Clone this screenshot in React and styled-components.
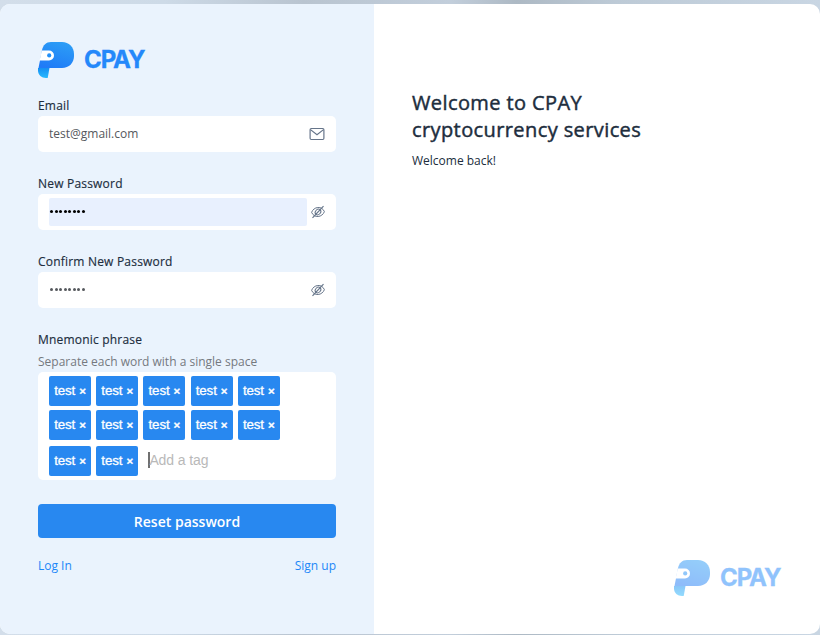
import React from "react";
import styled, { createGlobalStyle, css } from "styled-components";

const GlobalStyle = createGlobalStyle`
  * { box-sizing: border-box; }
  body {
    margin: 0;
    color: #202d3d;
    font-family: "Open Sans", "Noto Sans", sans-serif;
    font-size: 12px;
  }
`;

const Page = styled.div`
  height: 635px;
  padding: 4px 0 1px;
  background: linear-gradient(90deg, #d3deea 0%, #cddae7 20%, #b9c4d0 37%, #c2cedb 55%, #adb9c4 63%, #bdcad6 75%, #c9d6e3 100%);
`;

const Card = styled.div`
  display: flex;
  height: 630px;
  border-radius: 10px;
  background: #fff;
  overflow: hidden;
`;

const FormPanel = styled.main`
  width: 374px;
  padding: 38px 38px 0;
  background: #eaf3fd;
`;

const InfoPanel = styled.aside`
  flex: 1;
  display: flex;
  flex-direction: column;
  padding: 85px 38px 38px;
`;

const Brand = styled.div`
  display: flex;
  align-items: center;
  gap: 10px;
  height: 36px;
  opacity: ${(p) => (p.$faded ? 0.5 : 1)};
  ${(p) => p.$faded && css`
    margin-top: auto;
    margin-left: auto;
  `}
  svg { display: block; }
`;

const BrandName = styled.span`
  width: 62px;
  font: 700 24px/36px Inter, sans-serif;
  letter-spacing: -1.1px;
  -webkit-text-stroke: 0.3px #2488fa;
  color: #2488fa;
  white-space: nowrap;
`;

const Field = styled.div`
  margin-top: ${(p) => (p.$first ? 18 : 22)}px;
`;

const Label = styled.label`
  display: block;
  height: 20px;
  line-height: 20px;
  letter-spacing: 0.2px;
  -webkit-text-stroke: 0.15px currentColor;
`;

const Hint = styled.div`
  height: 20px;
  margin-top: 2px;
  line-height: 20px;
  color: #75797f;
`;

const InputBox = styled.div`
  display: flex;
  align-items: center;
  justify-content: space-between;
  height: 36px;
  padding: 4px 11px;
  border-radius: 5px;
  background: #fff;
  svg { display: block; flex: none; }
`;

const InputValue = styled.div`
  width: 258px;
  height: 28px;
  border-radius: 2px;
  line-height: 28px;
  color: ${(p) => (p.$filled ? "#000" : "#55585d")};
  background: ${(p) => (p.$filled ? "#e8f0fe" : "transparent")};
`;

const Dots = styled.div`
  display: flex;
  align-items: center;
  gap: 1.5px;
  height: 27px;
  padding-left: 1px;
`;

const Dot = styled.i`
  width: 3px;
  height: 3px;
  border-radius: 50%;
  background: currentColor;
`;

const TagsBox = styled.div`
  height: 108px;
  padding: 4px 11px;
  border-radius: 5px;
  background: #fff;
  font: 14px/30px "Liberation Sans", Arial, sans-serif;
`;

const TagRow = styled.div`
  display: flex;
  gap: 5.2px;
  margin-bottom: ${(p) => p.$gap || 0}px;
`;

const Tag = styled.span`
  display: flex;
  justify-content: center;
  gap: 4px;
  width: 42px;
  height: 30px;
  border-radius: 2px;
  color: #fff;
  background: #2888f0;
  font-size: 13.33px;
  letter-spacing: -0.1px;
  -webkit-text-stroke: 0.3px #fff;
`;

const TagClose = styled.b`
  font-size: 11.5px;
`;

const TagInput = styled.span`
  height: 16px;
  margin: 6px 0 0 5px;
  border-left: 2px solid #707070;
  line-height: 16px;
  color: #b9b9b9;
  text-indent: -1px;
  letter-spacing: -0.1px;
`;

const SubmitButton = styled.button`
  display: block;
  width: 100%;
  height: 34px;
  margin-top: 24px;
  padding: 1px 0 0;
  border: 0;
  border-radius: 4px;
  color: #fff;
  background: #2888f0;
  font: 600 14px/34px "Open Sans", "Noto Sans", sans-serif;
`;

const Links = styled.nav`
  display: flex;
  justify-content: space-between;
  margin-top: 18px;
  line-height: 20px;
`;

const Link = styled.a`
  color: #1c87f8;
`;

const Title = styled.h1`
  margin: 0;
  font-size: 20px;
  line-height: 27px;
  font-weight: 400;
  letter-spacing: 0.4px;
  -webkit-text-stroke: 0.45px currentColor;
`;

const Subtitle = styled.p`
  margin: 8px 0 0;
  line-height: 20px;
`;

function Logo({ faded }) {
  const id = faded ? "footer" : "header";
  return (
    <Brand $faded={faded}>
      <svg width="36" height="36" viewBox="0 0 36 36">
        <defs>
          <linearGradient id={`${id}-head`} x1="0.7" y1="0" x2="0.3" y2="1">
            <stop offset="0" stopColor="#2c9df6" />
            <stop offset="1" stopColor="#207bf7" />
          </linearGradient>
          <linearGradient id={`${id}-stem`} x1="0" y1="0" x2="0" y2="1">
            <stop offset="0" stopColor="#168ff2" />
            <stop offset="1" stopColor="#29baff" />
          </linearGradient>
        </defs>
        <path d="M0 26h11.500L9.700 36H8C3.500 36 0 33 0 28.500Z" fill={`url(#${id}-stem)`} />
        <path d="M13 0h11c7 0 12 5 12 12v2c0 7-5 12-12 12H.5L4 8C5.200 3 8 0 13 0Z" fill={`url(#${id}-head)`} />
        <path d="M3.800 8.500H11a5 5 0 0 1 0 10H1.600Z" fill="#fff" />
        <circle cx="11.200" cy="13.400" r="2.100" fill="#2490f7" />
      </svg>
      <BrandName>CPAY</BrandName>
    </Brand>
  );
}

function MailIcon() {
  return (
    <svg width="16" height="14" viewBox="0 0 16 14" fill="none" stroke="#66758a" strokeWidth="1.200">
      <rect x="1.100" y="1.500" width="13.800" height="11" rx="1.200" />
      <path d="m1.500 2.600 6.500 5.200 6.500-5.200" />
    </svg>
  );
}

function HiddenIcon() {
  return (
    <svg width="14" height="14" viewBox="0 0 14 14" fill="none" stroke="#66758a" strokeWidth="1">
      <path d="M.6 7.300c1.200-2.800 3.400-4.500 6.200-4.800s5.400 1.200 6.600 4.200c-1.200 2.800-3.400 4.500-6.200 4.800S1.800 10.300.6 7.300Z" />
      <ellipse cx="7" cy="7" rx="3.100" ry="2.500" transform="rotate(-45 7 7)" />
      <path d="M1.500 12.800 12.500 1.200" strokeWidth="1.200" />
    </svg>
  );
}

function PasswordField({ label, filled }) {
  return (
    <Field>
      <Label>{label}</Label>
      <InputBox>
        <InputValue $filled={filled}>
          <Dots>{Array.from({ length: 8 }, (_, i) => <Dot key={i} />)}</Dots>
        </InputValue>
        <HiddenIcon />
      </InputBox>
    </Field>
  );
}

function Tags({ count }) {
  return Array.from({ length: count }, (_, i) => (
    <Tag key={i}>test<TagClose>×</TagClose></Tag>
  ));
}

export default function App() {
  return (
    <>
      <GlobalStyle />
      <Page>
        <Card>
          <FormPanel>
            <Logo />
            <Field $first>
              <Label>Email</Label>
              <InputBox>
                <InputValue>test@gmail.com</InputValue>
                <MailIcon />
              </InputBox>
            </Field>
            <PasswordField label="New Password" filled />
            <PasswordField label="Confirm New Password" />
            <Field>
              <Label>Mnemonic phrase</Label>
              <Hint>Separate each word with a single space</Hint>
              <TagsBox>
                <TagRow $gap={4}><Tags count={5} /></TagRow>
                <TagRow $gap={6}><Tags count={5} /></TagRow>
                <TagRow>
                  <Tags count={2} />
                  <TagInput>Add a tag</TagInput>
                </TagRow>
              </TagsBox>
            </Field>
            <SubmitButton>Reset password</SubmitButton>
            <Links>
              <Link>Log In</Link>
              <Link>Sign up</Link>
            </Links>
          </FormPanel>
          <InfoPanel>
            <Title>Welcome to CPAY<br />cryptocurrency services</Title>
            <Subtitle>Welcome back!</Subtitle>
            <Logo faded />
          </InfoPanel>
        </Card>
      </Page>
    </>
  );
}
